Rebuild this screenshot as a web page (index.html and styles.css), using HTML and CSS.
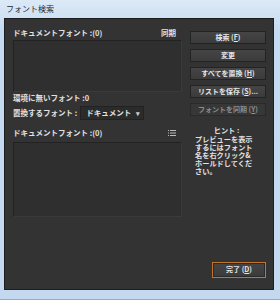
FILE: index.html
```html
<!DOCTYPE html>
<html lang="ja">
<head>
<meta charset="utf-8">
<link rel="stylesheet" href="styles.css">
</head>
<body>
<div class="window">
  <div class="titlebar">フォント検索</div>
  <div class="client">
    <div class="main">
      <div class="leftcol">
        <div class="label row"><span>ドキュメントフォント :(0)</span><span class="sync">同期</span></div>
        <div class="list list1"></div>
        <div class="label l2">環境に無いフォント :0</div>
        <div class="replace">
          <span class="label">置換するフォント :</span>
          <div class="select"><span>ドキュメント</span><span class="arrow">▾</span></div>
        </div>
        <div class="label row l3"><span>ドキュメントフォント :(0)</span>
          <svg class="listicon" width="8" height="6" viewBox="0 0 8 6"><rect x="0" y="0" width="1" height="1" fill="#bbb"/><rect x="0" y="2.5" width="1" height="1" fill="#bbb"/><rect x="0" y="5" width="1" height="1" fill="#bbb"/><rect x="2" y="0" width="6" height="1" fill="#bbb"/><rect x="2" y="2.5" width="6" height="1" fill="#bbb"/><rect x="2" y="5" width="6" height="1" fill="#bbb"/></svg>
        </div>
        <div class="list list2"></div>
      </div>
      <div class="rightcol">
        <div class="btn">検索 (<u>F</u>)</div>
        <div class="btn">変更</div>
        <div class="btn">すべてを置換 (<u>H</u>)</div>
        <div class="btn">リストを保存 (<u>S</u>)...</div>
        <div class="btn disabled">フォントを同期 (<u>Y</u>)</div>
        <div class="hint">
          <div class="hint-title">ヒント :</div>
          <p class="hint-body">プレビューを表示<br>するにはフォント<br>名を右クリック&amp;<br>ホールドしてくだ<br>さい。</p>
        </div>
      </div>
    </div>
    <div class="footer">
      <div class="btn done">完了 (<u>D</u>)</div>
    </div>
  </div>
</div>
</body>
</html>
```
FILE: styles.css
```css
* { box-sizing: border-box; }
html, body { margin: 0; padding: 0; }
body {
  width: 280px; height: 300px; overflow: hidden;
  font-family: "Noto Sans CJK JP", "Noto Sans", sans-serif;
}
.window {
  width: 280px; height: 300px;
  background: linear-gradient(#dce9f6, #c6dbf1 30px, #c4d9ef);
  padding: 0 6px 9px 4px;
  display: flex; flex-direction: column;
  border-bottom: 1px solid #9aaab8;
}
.titlebar {
  height: 18px; line-height: 18px;
  padding-left: 2px;
  font-size: 8px; color: #1e2a38;
}
.client {
  flex: 1;
  background: #333333;
  border: 1px solid #1e1e1e;
  padding: 9px 7px 11px 8px;
  display: flex; flex-direction: column;
  color: #e2e2e2;
  font-size: 7.5px; font-weight: 700;
}
.main { display: flex; gap: 8px; flex: 1; }
.leftcol { width: 169px; display: flex; flex-direction: column; }
.label { height: 10px; line-height: 10px; white-space: nowrap; }
.row { display: flex; justify-content: space-between; align-items: center; padding-right: 6px; }
.list {
  background: #2f2f2f;
  border: 1px solid #222;
  border-bottom-color: #3a3a3a;
  border-right-color: #3a3a3a;
}
.list1 { margin-top: 2px; height: 52px; }
.l2 { margin-top: 1px; }
.replace { margin-top: 3px; height: 14px; display: flex; align-items: center; gap: 3px; }
.select {
  width: 64px; height: 14px;
  background: #2b2b2b; border: 1px solid #222;
  display: flex; align-items: center; justify-content: space-between;
  padding: 0 3px 0 5px; line-height: 12px;
}
.arrow { font-size: 7px; color: #ccc; }
.l3 { margin-top: 8px; }
.listicon { display: block; }
.list2 { margin-top: 4px; height: 75px; }
.rightcol { width: 76px; padding-top: 3px; display: flex; flex-direction: column; gap: 5px; }
.btn {
  height: 13px; line-height: 11px;
  text-align: center;
  background: linear-gradient(#454545, #3b3b3b);
  border: 1px solid #232323;
  color: #e6e6e6;
  font-size: 7px; white-space: nowrap;
}
.btn u { text-underline-offset: 1px; }
.btn.disabled { background: #373737; color: #8c8c8c; border-color: #2a2a2a; }
.hint { margin-top: 5px; padding-left: 5px; font-size: 7.2px; }
.hint-title { text-align: center; padding-right: 8px; line-height: 8px; margin-bottom: 1px; }
.hint-body { margin: 0; line-height: 8px; white-space: nowrap; }
.footer { display: flex; justify-content: flex-end; }
.done {
  width: 54px; height: 16px; line-height: 12px;
  border: 1px solid #c0752a;
  box-shadow: inset 0 0 0 1px #2a2a2a;
}
```
